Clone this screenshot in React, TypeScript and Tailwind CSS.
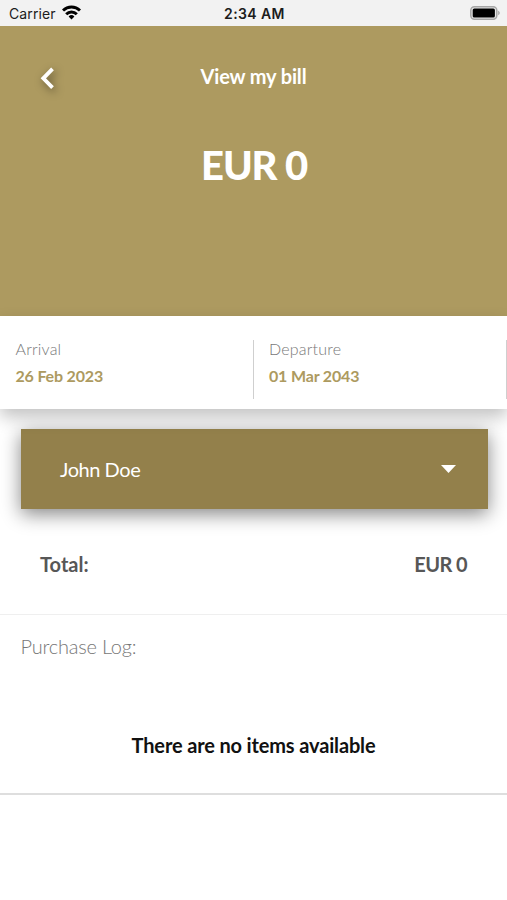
type StayDateProps = { label: string; value: string };

function StayDate({ label, value }: StayDateProps) {
  return (
    <div className="h-[59px] flex-1 border-r-[1.5px] border-[#cfcfcf] pl-[15.5px]">
      <div className="-mt-px text-[16px] leading-[20px] font-light tracking-[0.2px] text-[#777]">{label}</div>
      <div className="mt-[7px] text-[16px] leading-[20px] font-bold tracking-[-0.17px] text-[#ad9a60]">{value}</div>
    </div>
  );
}

function StatusBar() {
  return (
    <div className="grid h-[26px] grid-cols-3 items-center bg-[#f2f2f2] pb-px pr-[7px] pl-[9px] font-['Inter','Liberation_Sans',sans-serif] text-[#1c1c1c]">
      <div className="flex items-center gap-[6px] text-[14px] leading-[18px]">
        <span className="pt-[2px] tracking-[0.1px]">Carrier</span>
        <svg width="19" height="15" viewBox="0 0 19 15" fill="none" stroke="#000" strokeWidth="3">
          <path d="M1 5.5a12.2 12.2 0 0 1 17 0" />
          <path d="M4.2 9.2a7.5 7.5 0 0 1 10.6 0" />
          <path d="M6.6 11.4a4.1 4.1 0 0 1 5.8 0L9.5 14.4Z" fill="#000" stroke="none" />
        </svg>
      </div>
      <span className="pt-[2px] text-center text-[14px] leading-[18px] font-semibold tracking-[0.4px] whitespace-nowrap">2:34 AM</span>
      <svg className="justify-self-end" width="30" height="14" viewBox="0 0 30 14">
        <rect x="0.8" y="0.8" width="26" height="12.4" rx="3.6" fill="#e8e8e8" stroke="#a6a6a6" strokeWidth="1.5" />
        <rect x="2.7" y="2.5" width="22.2" height="9" rx="1.6" fill="#000" />
        <path d="M28.2 4.8c2 .7 2 3.7 0 4.4Z" fill="#a6a6a6" />
      </svg>
    </div>
  );
}

export default function App() {
  return (
    <div className="flex h-[900px] w-full flex-col overflow-hidden bg-white font-['Lato',sans-serif]">
      <StatusBar />
      <header className="h-[290px] bg-[#ad9a60] text-white">
        <div className="grid grid-cols-[1fr_auto_1fr] items-center pt-[36px]">
          <button className="ml-[38px] h-[28px] w-[20px] pt-[4px]" aria-label="Back">
            <svg className="drop-shadow-[2px_3px_4px_rgba(0,0,0,0.5)]" width="20" height="24" viewBox="0 0 20 24" fill="none" stroke="#fff" strokeWidth="3.8">
              <path d="M14.5 2.9 5.3 12.3 14.5 21.7" />
            </svg>
          </button>
          <h1 className="-mt-px text-[20px] leading-[28px] font-bold tracking-[-0.15px]">View my bill</h1>
        </div>
        <div className="mt-[51px] pl-px text-center text-[40px] leading-[48px] font-black tracking-[-1.1px]">EUR 0</div>
      </header>

      <section className="relative z-10 flex h-[93px] bg-white pt-[24px] shadow-[0_8px_16px_rgba(0,0,0,0.24)]">
        <StayDate label="Arrival" value="26 Feb 2023" />
        <StayDate label="Departure" value="01 Mar 2043" />
      </section>

      <main className="flex flex-col">
        <div className="mr-[19.5px] ml-[20.5px] mt-[20px] flex h-[80px] items-center justify-between bg-[#93804b] pr-[31.5px] pl-[39.5px] text-white shadow-[0_5px_18px_rgba(0,0,0,0.48)]">
          <span className="text-[20px] leading-[28px] tracking-[-0.45px]">John Doe</span>
          <svg width="15" height="8" viewBox="0 0 15 8" fill="#fff">
            <path d="M0 0h15L7.5 8Z" />
          </svg>
        </div>
        <div className="flex h-[106px] justify-between border-b border-[#efefef] px-[40px] pt-[41px] text-[20px] leading-[28px] font-bold text-[#575757]">
          <span>Total:</span>
          <span className="tracking-[-0.6px]">EUR 0</span>
        </div>
        <div className="h-[180px] border-b-2 border-[#dedede] pt-[17px]">
          <div className="pl-[20.5px] text-[20px] leading-[28px] font-light tracking-[-0.22px] text-[#777]">Purchase Log:</div>
          <p className="mt-[71px] text-center text-[20px] leading-[28px] font-bold tracking-[-0.15px] text-[#111]">There are no items available</p>
        </div>
      </main>
    </div>
  );
}
